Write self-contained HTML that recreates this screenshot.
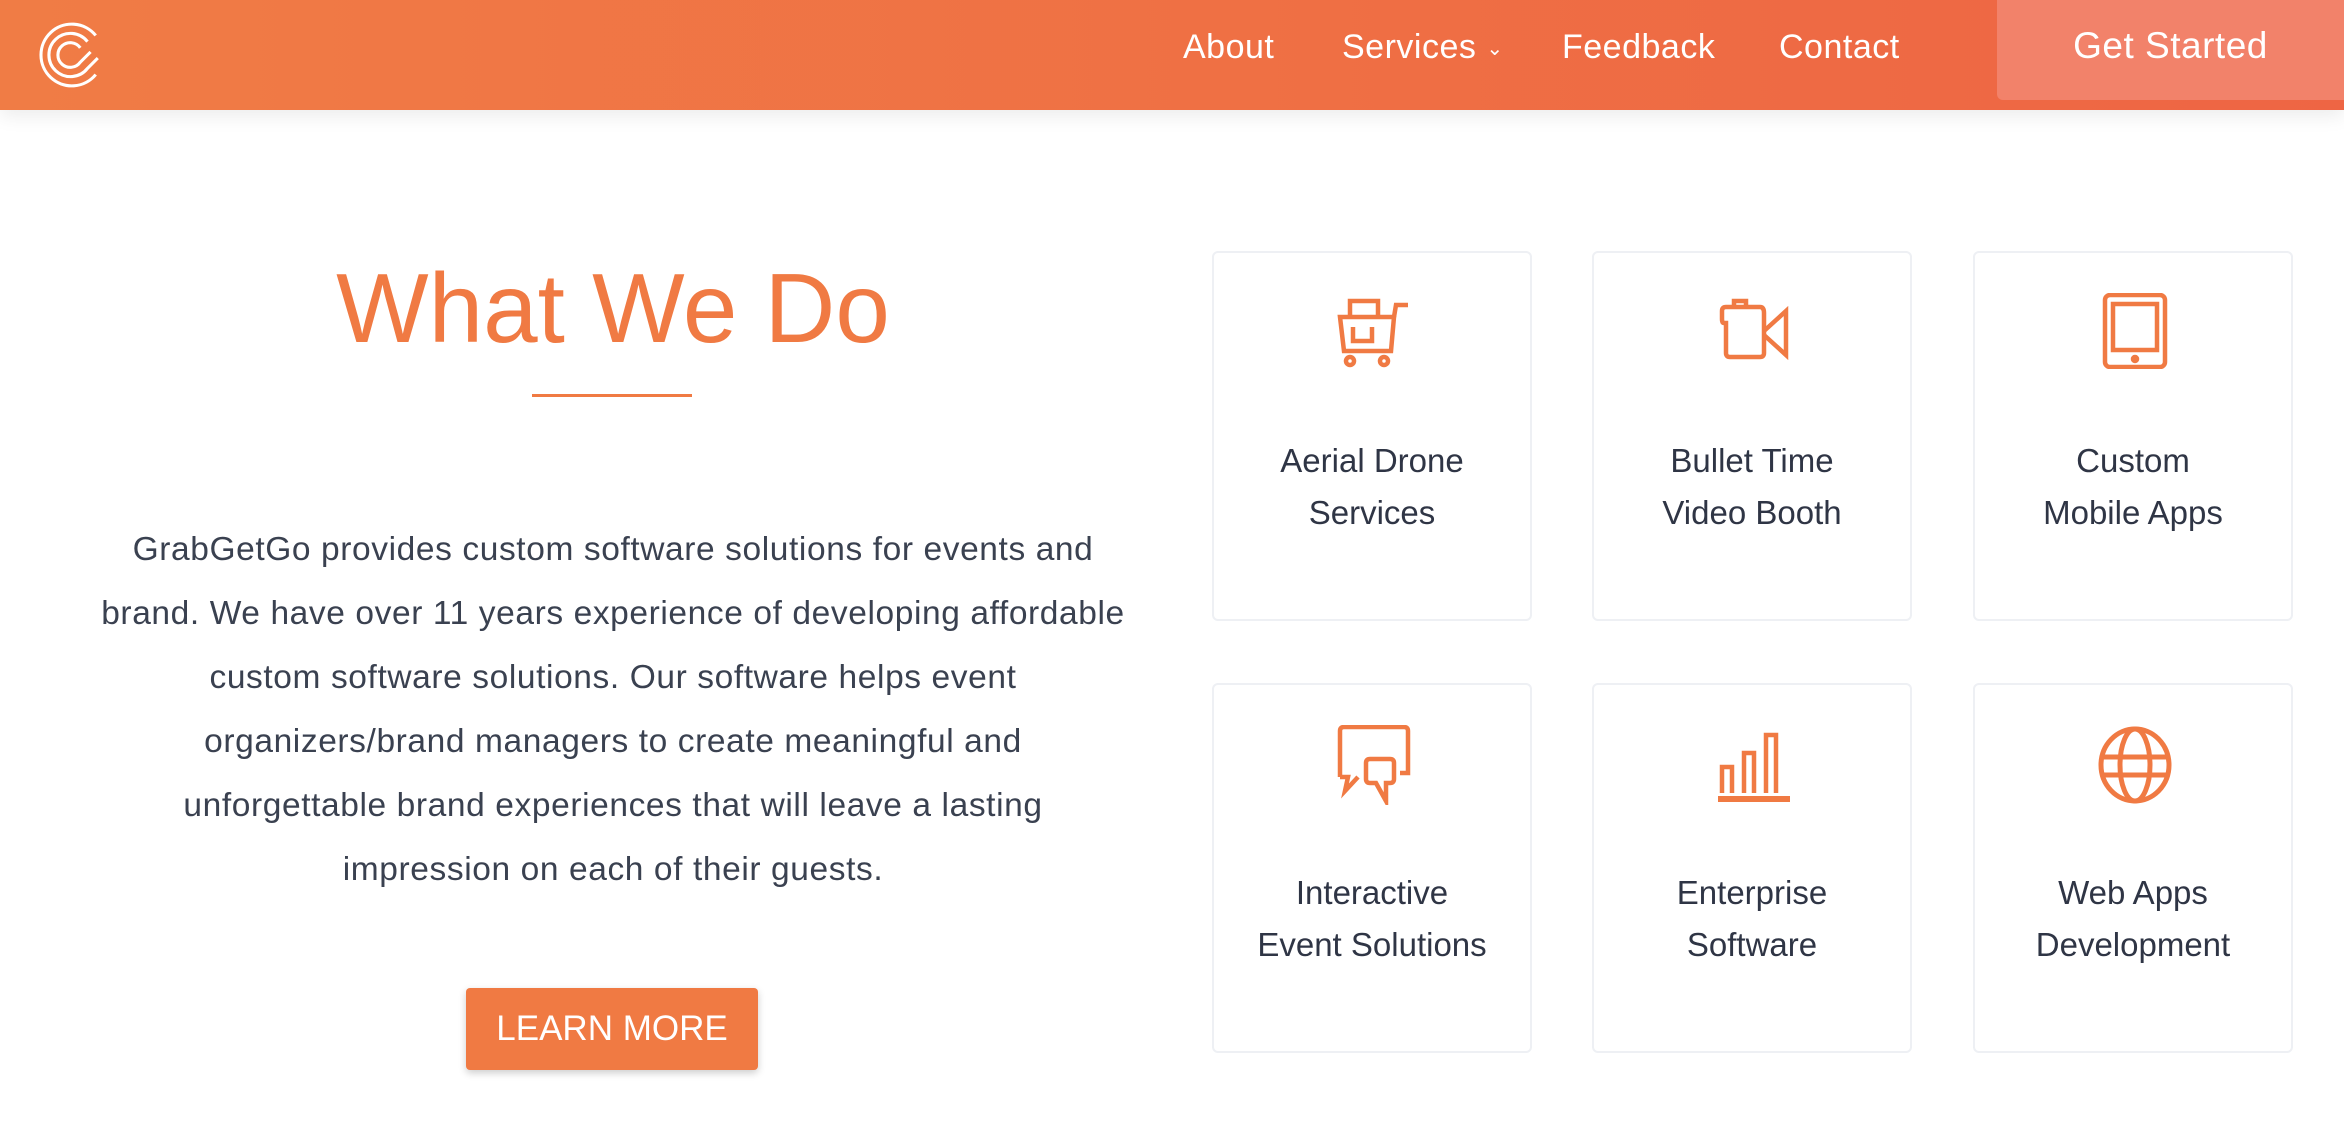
<!DOCTYPE html>
<html><head><meta charset="utf-8"><style>
*{margin:0;padding:0;box-sizing:border-box}
body{width:2344px;height:1130px;background:#fff;font-family:"Liberation Sans",sans-serif;position:relative;overflow:hidden}
.hdr{position:absolute;left:0;top:0;width:2344px;height:110px;background:linear-gradient(90deg,#f07c45,#ee6544);box-shadow:0 6px 18px rgba(0,0,0,.08)}
.nav{position:absolute;top:28px;color:#fff;font-size:34px;letter-spacing:.5px}
.gs{position:absolute;left:1997px;top:0;width:347px;height:100px;background:#f2826a;border-radius:0 0 0 6px;color:#fff;font-size:37px;text-align:center;line-height:92px;letter-spacing:.5px}
h1{position:absolute;left:213px;width:800px;top:252px;text-align:center;font-weight:300;font-size:98px;color:#f07a43}
.ul{position:absolute;left:532px;top:394px;width:160px;height:3px;background:#f07a43}
p{position:absolute;left:0;width:1226px;top:518px;text-align:center;font-size:33.5px;letter-spacing:.6px;line-height:64px;color:#3a4150;white-space:nowrap}
.btn{position:absolute;left:466px;top:988px;width:292px;height:82px;background:#f07a43;color:#fff;font-size:35px;text-align:center;line-height:82px;border-radius:4px;box-shadow:0 3px 8px rgba(0,0,0,.2)}
.card{position:absolute;width:320px;height:370px;border:2px solid #eef0f4;border-radius:6px;text-align:center;color:#2f3545;font-size:33px;line-height:52px}
.card svg{position:absolute;left:122px;top:40px}
.card div{position:absolute;left:0;right:0;top:182px}
</style></head><body>
<div class="hdr">
<svg style="position:absolute;left:34px;top:18px" width="72" height="74" viewBox="0 0 70 70" fill="none" stroke="#fff" stroke-width="3">
<path d="M60 16A30 30 0 1 0 60 54"/><path d="M52 22A21 21 0 1 0 52 48L62 38"/><path d="M45 28A12 12 0 1 0 45 42L55 32"/>
</svg>
<span class="nav" style="left:1183px">About</span>
<span class="nav" style="left:1342px">Services <span style="font-size:20px;vertical-align:3px">&#8964;</span></span>
<span class="nav" style="left:1562px">Feedback</span>
<span class="nav" style="left:1779px">Contact</span>
<div class="gs">Get Started</div>
</div>
<h1>What We Do</h1>
<div class="ul"></div>
<p>GrabGetGo provides custom software solutions for events and<br>brand. We have over 11 years experience of developing affordable<br>custom software solutions. Our software helps event<br>organizers/brand managers to create meaningful and<br>unforgettable brand experiences that will leave a lasting<br>impression on each of their guests.</p>
<div class="btn">LEARN MORE</div>

<div class="card" style="left:1212px;top:251px"><svg width="76" height="76" viewBox="0 0 76 76" fill="none" stroke="#f07a43" stroke-width="4.5"><path d="M4 24H58L55 58H8Z"/><path d="M58 24L60 12H72"/><path d="M14 22V8H42V22"/><path d="M17 34V48H36V34"/><circle cx="14" cy="68" r="4"/><circle cx="48" cy="68" r="4"/></svg><div>Aerial Drone<br>Services</div></div>
<div class="card" style="left:1592px;top:251px"><svg width="76" height="76" viewBox="0 0 76 76" fill="none" stroke="#f07a43" stroke-width="4.5"><path d="M18 14V8H30V14"/><path d="M6 18Q6 14 10 14H44Q48 14 48 20V60Q48 64 44 64H14Q10 64 10 60V30H8Q6 30 6 26Z"/><path d="M48 38L70 18V62L48 42"/></svg><div>Bullet Time<br>Video Booth</div></div>
<div class="card" style="left:1973px;top:251px"><svg width="76" height="76" viewBox="0 0 76 76" fill="none" stroke="#f07a43" stroke-width="4.5"><rect x="8" y="2" width="60" height="72" rx="5"/><rect x="16" y="11" width="44" height="46"/><circle cx="38" cy="66" r="2" fill="#f07a43"/></svg><div>Custom<br>Mobile Apps</div></div>

<div class="card" style="left:1212px;top:683px"><svg width="76" height="80" viewBox="0 0 76 80" fill="none" stroke="#f07a43" stroke-width="4.5"><path d="M4 52V6Q4 2 8 2H68Q72 2 72 6V48H64"/><path d="M4 52H12L9 66L22 52"/><path d="M30 38Q30 34 34 34H54Q58 34 58 38V54Q58 58 54 58H50L50 76L40 58H34Q30 58 30 54Z"/></svg><div>Interactive<br>Event Solutions</div></div>
<div class="card" style="left:1592px;top:683px"><svg width="76" height="80" viewBox="0 0 76 80" fill="none" stroke="#f07a43" stroke-width="4.5"><path d="M6 68V42H16V68"/><path d="M28 68V28H38V68"/><path d="M50 68V10H60V68"/><path d="M2 74H74" stroke-width="6"/></svg><div>Enterprise<br>Software</div></div>
<div class="card" style="left:1973px;top:683px"><svg width="76" height="80" viewBox="0 0 76 80" fill="none" stroke="#f07a43" stroke-width="5"><ellipse cx="38" cy="40" rx="34" ry="36"/><ellipse cx="38" cy="40" rx="15" ry="36"/><path d="M4 32H72M4 50H72"/></svg><div>Web Apps<br>Development</div></div>
</body></html>
